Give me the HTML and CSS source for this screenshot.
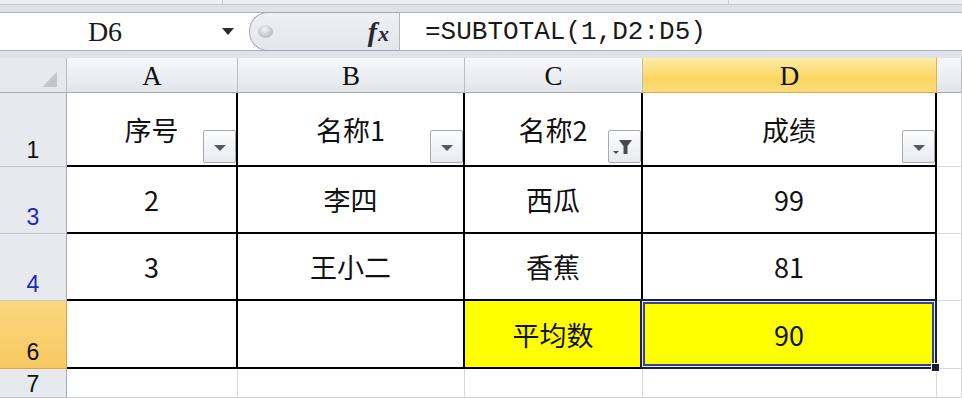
FILE: index.html
```html
<!DOCTYPE html>
<html lang="zh-CN">

<head>
    <meta charset="UTF-8">
    <meta name="viewport" content="width=device-width, initial-scale=1.0">
    <title>SUBTOTAL 平均数</title>
    <link rel="stylesheet" href="styles.css">
</head>

<body>
    <!-- ribbon edge -->
    <div class="ribbon-edge">
        <span class="seg seg-1"></span>
        <span class="seg seg-2"></span>
        <span class="seg seg-3"></span>
    </div>

    <!-- formula bar -->
    <div class="formula-bar">
        <div class="name-box">
            <span class="name-text">D6</span>
            <span class="name-arrow"></span>
        </div>
        <div class="fx-pill">
            <span class="knob"></span>
            <span class="fx"><i>f</i><b>x</b></span>
        </div>
        <div class="formula-input">=SUBTOTAL(1,D2:D5)</div>
    </div>

    <!-- sheet -->
    <div class="sheet">
        <div class="col-head corner"><span class="corner-tri"></span></div>
        <div class="col-head">A</div>
        <div class="col-head">B</div>
        <div class="col-head">C</div>
        <div class="col-head active">D</div>
        <div class="col-head"></div>

        <div class="row-head">1</div>
        <div class="cell">序号<span class="filter-btn"><span class="tri"></span></span></div>
        <div class="cell">名称1<span class="filter-btn"><span class="tri"></span></span></div>
        <div class="cell">名称2<span class="filter-btn">
                <svg width="31" height="31" viewBox="0 0 31 31">
                    <path d="M10 9 H23 L18.5 15 V23 H14.5 V15 Z" fill="#4a4a4a" />
                    <path d="M4 20 H10 L7 23 Z" fill="#4a4a4a" />
                </svg>
            </span></div>
        <div class="cell">成绩<span class="filter-btn"><span class="tri"></span></span></div>
        <div class="blank"></div>

        <div class="row-head filtered">3</div>
        <div class="cell">2</div>
        <div class="cell">李四</div>
        <div class="cell">西瓜</div>
        <div class="cell">99</div>
        <div class="blank"></div>

        <div class="row-head filtered">4</div>
        <div class="cell">3</div>
        <div class="cell">王小二</div>
        <div class="cell">香蕉</div>
        <div class="cell">81</div>
        <div class="blank"></div>

        <div class="row-head active">6</div>
        <div class="cell"></div>
        <div class="cell"></div>
        <div class="cell yellow">平均数</div>
        <div class="cell yellow selected">90</div>
        <div class="blank"></div>

        <div class="row-head last">7</div>
        <div class="blank"></div>
        <div class="blank"></div>
        <div class="blank"></div>
        <div class="blank"></div>
        <div class="blank"></div>
    </div>
</body>

</html>
```

FILE: styles.css
```css
body {
    margin: 0;
    background-color: #dfe3e8;
    font-family: "Liberation Sans", Arial, sans-serif;
    color: #000;
    overflow: hidden;
}

/* ribbon edge at the very top */
.ribbon-edge {
    display: flex;
    height: 5px;
    box-sizing: border-box;
    background-color: #eef1f4;
    border-bottom: 1px solid #c3c8cf;
}

.seg {
    box-sizing: border-box;
    border-right: 1px solid #c6cbd2;
}

.seg-1 {
    width: 223px;
}

.seg-2 {
    width: 506px;
}

.seg-3 {
    flex: 1;
    border-right: none;
}

/* formula bar */
.formula-bar {
    display: flex;
    height: 39px;
    margin-top: 7px;
    box-sizing: border-box;
    border-top: 1px solid #a9afb7;
    border-bottom: 1px solid #a9afb7;
    background-color: #fff;
}

.name-box {
    width: 249px;
    display: flex;
    align-items: center;
    background-color: #fff;
}

.name-text {
    width: 210px;
    text-align: center;
    font-family: "Liberation Serif", serif;
    font-size: 28px;
    line-height: 1;
    color: #1a1a1a;
}

.name-arrow {
    margin-left: 12px;
    width: 0;
    height: 0;
    border-left: 6px solid transparent;
    border-right: 6px solid transparent;
    border-top: 7px solid #2b2b2b;
}

.fx-pill {
    width: 151px;
    box-sizing: border-box;
    display: flex;
    align-items: center;
    justify-content: space-between;
    padding: 0 10px 0 8px;
    background: linear-gradient(#eef0f3, #e3e6eb);
    border: 1px solid #a3a9b1;
    border-right: 1px solid #b3b8bf;
    border-radius: 19px 0 0 19px;
    margin: -1px 0;
}

.knob {
    width: 15px;
    height: 13px;
    border-radius: 50%;
    background: radial-gradient(circle at 45% 35%, #f4f5f6, #b0b4ba 80%);
}

.fx {
    font-family: "Liberation Serif", serif;
    color: #2a2630;
    line-height: 1;
    display: flex;
    align-items: baseline;
}

.fx i {
    font-size: 28px;
    font-weight: bold;
}

.fx b {
    font-size: 22px;
    font-style: italic;
    margin-left: 1px;
}

.formula-input {
    flex: 1;
    display: flex;
    align-items: center;
    padding-left: 25px;
    font-family: "Liberation Mono", monospace;
    font-size: 26px;
    line-height: 1;
    color: #1a1a1a;
    background-color: #fff;
}

/* sheet grid */
.sheet {
    margin-top: 7px;
    display: grid;
    grid-template-columns: 67px 171px 227px 178px 294px 1fr;
    grid-template-rows: 35px 74px 67px 67px 68px 29px;
    background-color: #fff;
}

.col-head {
    box-sizing: border-box;
    display: flex;
    justify-content: center;
    align-items: flex-end;
    padding-bottom: 2px;
    background: linear-gradient(#f7f8fa, #e1e5ea);
    border-right: 1px solid #b9bfc8;
    border-bottom: 1px solid #a4abb5;
    font-family: "Liberation Serif", serif;
    font-size: 27px;
    line-height: 1;
    color: #111;
}

.col-head.active {
    background: linear-gradient(#fdeca9, #fbd660 60%, #fbdc7a);
    border-right-color: #e0b24f;
    border-bottom-color: #dba845;
}

.corner {
    position: relative;
    background: #e6e9ee;
}

.corner-tri {
    position: absolute;
    right: 9px;
    bottom: 5px;
    width: 0;
    height: 0;
    border-left: 15px solid transparent;
    border-bottom: 15px solid #c3c7cd;
}

.row-head {
    box-sizing: border-box;
    display: flex;
    justify-content: center;
    align-items: flex-end;
    padding-bottom: 4px;
    background-color: #e6e9ee;
    border-right: 1px solid #a4abb5;
    border-bottom: 1px solid #c3c8cf;
    font-size: 23px;
    line-height: 1;
    color: #111;
}

.row-head.filtered {
    color: #1a28c0;
}

.row-head.active {
    background: linear-gradient(#fbd77e, #f8c862);
    border-right-color: #e2a243;
    border-bottom-color: #e2a243;
}

.row-head.last {
    padding-bottom: 0;
    align-items: flex-start;
    padding-top: 4px;
    overflow: hidden;
}

.cell {
    position: relative;
    box-sizing: border-box;
    display: flex;
    justify-content: center;
    align-items: center;
    border-right: 2px solid #000;
    border-bottom: 2px solid #000;
    font-family: "Noto Sans CJK SC", "Liberation Sans", sans-serif;
    font-size: 27px;
    line-height: 1;
    color: #111;
}

.yellow {
    background-color: #ffff00;
}

.selected::after {
    content: "";
    position: absolute;
    left: -3px;
    top: -2px;
    right: -2px;
    bottom: -2px;
    border: 2px solid #1c1c44;
    border-radius: 2px;
    box-shadow: inset 0 0 0 1px #e8ebf6, inset 0 0 0 3px #34439a;
}

.selected::before {
    content: "";
    position: absolute;
    right: -5px;
    bottom: -5px;
    width: 7px;
    height: 7px;
    background-color: #1c1c2c;
    border: 1px solid #fff;
    z-index: 2;
}

.blank {
    box-sizing: border-box;
    border-right: 1px solid #d4d8de;
    border-bottom: 1px solid #d4d8de;
}

/* autofilter buttons */
.filter-btn {
    position: absolute;
    right: 0;
    bottom: 2px;
    width: 33px;
    height: 33px;
    box-sizing: border-box;
    display: flex;
    justify-content: center;
    align-items: center;
    border: 1px solid #a6abb1;
    border-radius: 2px;
    background: linear-gradient(#fdfdfe, #e8ebef);
}

.tri {
    width: 0;
    height: 0;
    margin-top: 3px;
    border-left: 6px solid transparent;
    border-right: 6px solid transparent;
    border-top: 6px solid #555a60;
}
```
